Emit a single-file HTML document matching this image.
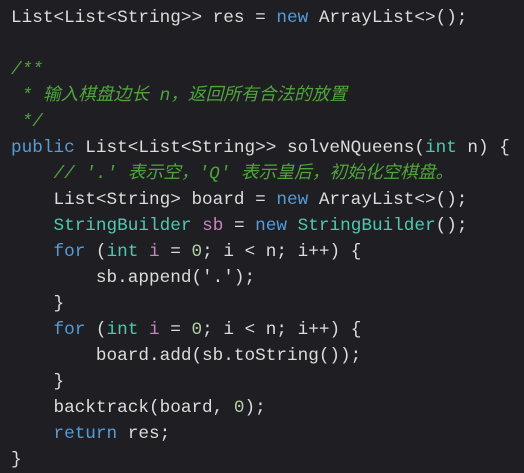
<!DOCTYPE html>
<html><head><meta charset="utf-8"><style>
html,body{margin:0;padding:0;background:#1f1e23;width:524px;height:473px;overflow:hidden}
pre{margin:0;position:absolute;left:11px;top:5px;font-family:"Liberation Mono","Noto Sans CJK SC",monospace;font-size:17.7px;line-height:26px;color:#dcdcdc}
.k{color:#569cd6}.t{color:#4ec9b0}.v{color:#c586c0}.c{color:#4fa53c;font-style:italic}.n{color:#b5cea8}
</style></head><body><pre>List&lt;List&lt;String&gt;&gt; res = <span class="k">new</span> ArrayList&lt;&gt;();

<span class="c">/**</span>
<span class="c"> * 输入棋盘边长 n，返回所有合法的放置</span>
<span class="c"> */</span>
<span class="k">public</span> List&lt;List&lt;String&gt;&gt; solveNQueens(<span class="t">int</span> n) {
    <span class="c">// '.' 表示空，'Q' 表示皇后，初始化空棋盘。</span>
    List&lt;String&gt; board = <span class="k">new</span> ArrayList&lt;&gt;();
    <span class="t">StringBuilder</span> <span class="v">sb</span> = <span class="k">new</span> <span class="t">StringBuilder</span>();
    <span class="k">for</span> (<span class="t">int</span> <span class="v">i</span> = <span class="n">0</span>; i &lt; n; i++) {
        sb.append('.');
    }
    <span class="k">for</span> (<span class="t">int</span> <span class="v">i</span> = <span class="n">0</span>; i &lt; n; i++) {
        board.add(sb.toString());
    }
    backtrack(board, <span class="n">0</span>);
    <span class="k">return</span> res;
}</pre></body></html>
